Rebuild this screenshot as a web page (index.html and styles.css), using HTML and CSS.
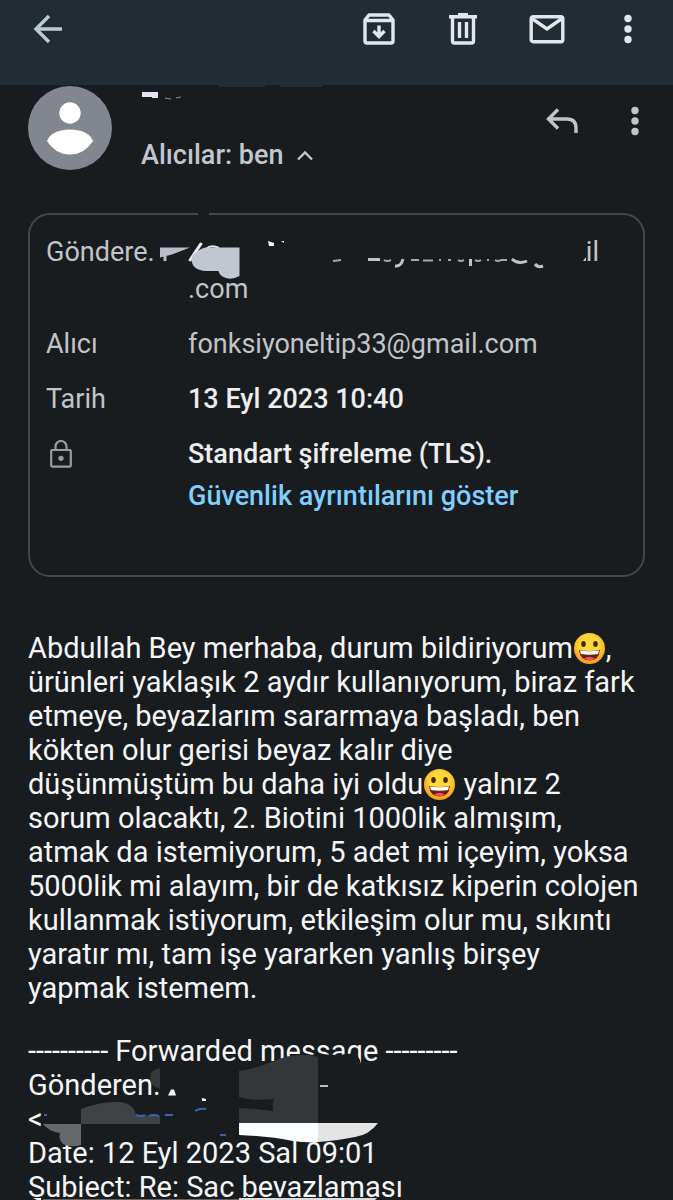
FILE: index.html
```html
<!DOCTYPE html>
<html lang="tr">
<head>
  <meta charset="UTF-8">
  <meta name="viewport" content="width=device-width, initial-scale=1.0">
  <title>E-posta</title>
  <link rel="stylesheet" href="styles.css">
</head>
<body>

<header class="toolbar">
  <button class="icon-btn" aria-label="Geri">
    <svg width="30" height="30" viewBox="0 0 30 30" fill="none" stroke="#bccad3" stroke-width="3.400"><path d="M29 15H4M16 2L3 15l13 13"/></svg>
  </button>
  <div class="actions">
    <button class="icon-btn" aria-label="Arşivle">
      <svg width="32" height="32" viewBox="0 0 32 32" fill="none" stroke="#e2e7ec" stroke-width="3.4"><path d="M2 7v21q0 2 2 2h24q2 0 2-2V7l-4-5H6zM3 7.500h26" stroke-linejoin="round"/><path d="M16 12.500v10M10.500 18l5.500 5.500 5.500-5.500"/></svg>
    </button>
    <button class="icon-btn" aria-label="Sil">
      <svg width="30" height="32" viewBox="0 0 30 32" fill="none" stroke="#e2e7ec" stroke-width="3.400"><path d="M1 3.700h28M10 1.700h10M4.500 4v24q0 2 2 2h17q2 0 2-2V4"/><path d="M11.500 9v16M18.500 9v16"/></svg>
    </button>
    <button class="icon-btn" aria-label="Okunmadı olarak işaretle">
      <svg width="36" height="30" viewBox="0 0 36 30" fill="none" stroke="#e2e7ec" stroke-width="3.400"><rect x="2.200" y="2.700" width="31.600" height="25" rx="2"/><path d="M3 4.500l15 10.500 15-10.500"/></svg>
    </button>
    <button class="icon-btn more" aria-label="Diğer seçenekler">
      <svg width="8" height="30" viewBox="0 0 8 30" fill="#e2e7ec"><circle cx="4" cy="4.500" r="3.700"/><circle cx="4" cy="15" r="3.700"/><circle cx="4" cy="25.500" r="3.700"/></svg>
    </button>
  </div>
</header>

<main>
  <section class="sender">
    <svg class="avatar" width="84" height="84" viewBox="0 0 84 84"><circle cx="42" cy="42" r="42" fill="#82868e"/><g fill="#fff"><circle cx="42" cy="27" r="10.700"/><path d="M19 55Q23 44 42 43.500 61 44 65 55 56 68.500 42 68.500 28 68.500 19 55z"/></g></svg>
    <div class="who">
      <svg class="name" width="190" height="51" viewBox="141 85 190 51">
        <path d="M218 85h47v2h-47zM280 85h42v2h-42z" fill="#222d33"/>
        <path d="M142 92h16v6h-6v-1h-10z" fill="#e2e5ea"/>
        <path d="M165 98l6 1M176 98l5-1" stroke="#8b9095" fill="none"/>
      </svg>
      <button class="recipients">Alıcılar: ben
        <svg width="16" height="11" viewBox="0 0 16 11" fill="none" stroke="#c1c7ce" stroke-width="2.400"><path d="M1 9.500l7-7 7 7"/></svg>
      </button>
    </div>
    <div class="sender-actions">
      <button class="icon-btn" aria-label="Yanıtla">
        <svg width="32" height="26" viewBox="0 0 32 26" fill="none" stroke="#c1c5c9" stroke-width="3.400"><path d="M12 1.500L2.500 11l9.500 9.500M3 11h18q9 0 9 9v5"/></svg>
      </button>
      <button class="icon-btn more" aria-label="Diğer">
        <svg width="8" height="30" viewBox="0 0 8 30" fill="#c1c5c9"><circle cx="4" cy="4.500" r="3.700"/><circle cx="4" cy="15" r="3.700"/><circle cx="4" cy="25.500" r="3.700"/></svg>
      </button>
    </div>
  </section>

  <section class="details">
    <dl>
      <dt>Göndere.</dt>
      <dd><span class="hidden-mail">il</span>.com</dd>
      <dt>Alıcı</dt>
      <dd>fonksiyoneltip33@gmail.com</dd>
      <dt>Tarih</dt>
      <dd class="bright">13 Eyl 2023 10:40</dd>
      <dt>
        <svg class="lock" width="22" height="28" viewBox="0 0 22 28" fill="none" stroke="#999da1" stroke-width="2.200"><rect x="1.200" y="10" width="19.600" height="16.600" rx="1"/><path d="M5.500 10V6.500a5.500 5.500 0 0 1 11 0V10"/><circle cx="11" cy="18.300" r="2.600" fill="#999da1" stroke="none"/></svg>
      </dt>
      <dd class="bright">Standart şifreleme (TLS).<a href="#">Güvenlik ayrıntılarını göster</a></dd>
    </dl>
    <svg class="scribble" width="617" height="364" viewBox="28 213 617 364" fill="none">
      <path d="M198 212h11v3h-11z" fill="#191c1f"/>
      <path d="M160 247.500l30 0-18 7-12 3z" fill="#b9bfc5"/>
      <path d="M165 256v5" stroke="#b9bfc5" stroke-width="3"/>
      <path d="M201.500 243l-12 18" stroke="#f1f3f5" stroke-width="3"/>
      <path d="M206 249q5-5 13-1" stroke="#e4e7ea" stroke-width="2"/>
      <path d="M192 256q6-7 14-8.500h33.500V276q-9 5-16 1-4-2-5-6h-12q-17-1-14.500-15z" fill="#c1c7ce"/>
      <path d="M268 241l6 2v3h-5zM281 241h3v2z" fill="#f1f3f5"/>
      <path d="M333 261l8-1M384 260q3 2 7 0M411 260h8M423 260.500h10M439 260h2M448 260h3M458 260q3 2 6 0M475 260q3 2 6 0M487 260h2M495 260q3 2 6 0h6" stroke="#a4a8ac" stroke-width="2"/>
      <path d="M368 259.500h12M403 259q-2 8-8 7M470.500 259v7M512 259q6 6 15 2M535 264q3 4 8 2" stroke="#c1c5c9" stroke-width="3"/>
      <path d="M583 261l3-4v4z" fill="#c1c5c9"/>
    </svg>
  </section>

  <article class="message">
    <svg width="0" height="0" class="defs">
      <defs>
        <radialGradient id="face" cx=".5" cy=".4" r=".6"><stop offset=".5" stop-color="#ffd83a"/><stop offset="1" stop-color="#f59a1e"/></radialGradient>
        <symbol id="grin" viewBox="0 0 33 33">
          <circle cx="16.500" cy="16.500" r="15.500" fill="url(#face)"/>
          <ellipse cx="10.500" cy="12" rx="2.300" ry="3" fill="#422b0d"/>
          <ellipse cx="22.500" cy="12" rx="2.300" ry="3" fill="#422b0d"/>
          <path d="M6 18q10.500 2 21 0-1 10.500-10.500 10.500T6 18z" fill="#6b1f16"/>
          <path d="M7 18.500q9.500 1.500 19 0l-.8 3.500q-8.700 1.500-17.400 0z" fill="#fff"/>
          <path d="M11 26.500q5.500-3.500 11 0-5.500 3.500-11 0z" fill="#ef5350"/>
        </symbol>
      </defs>
    </svg>
    <p>Abdullah Bey merhaba, durum bildiriyorum<svg class="emoji" aria-hidden="true"><use href="#grin"/></svg>, ürünleri yaklaşık 2 aydır kullanıyorum, biraz fark etmeye, beyazlarım sararmaya başladı, ben kökten olur gerisi beyaz kalır diye düşünmüştüm bu daha iyi oldu<svg class="emoji" aria-hidden="true"><use href="#grin"/></svg> yalnız 2 sorum olacaktı, 2. Biotini 1000lik almışım, atmak da istemiyorum, 5 adet mi içeyim, yoksa 5000lik mi alayım, bir de katkısız kiperin colojen kullanmak istiyorum, etkileşim olur mu, sıkıntı yaratır mı, tam işe yararken yanlış birşey yapmak istemem.</p>
    <div class="forwarded">
      ---------- Forwarded message ---------<br>
      Gönderen.<br>
      &lt;<br>
      Date: 12 Eyl 2023 Sal 09:01<br>
      Subject: Re: Saç beyazlaması
      <svg class="scribble" width="617" height="165" viewBox="28 1035 617 165" fill="none">
        <path d="M290 1063l10-7 18-2 20 1 18-2 4 7 2 9h-72z" fill="#191c1f"/>
        <path d="M160 1068q-10 2-10 10t10 11z" fill="#35393c"/>
        <path d="M168 1095.500h8l-2-6h-3zM202 1098l4 1v2h-4z" fill="#f4f6f8"/>
        <path d="M320 1086h8" stroke="#b9bcc0" stroke-width="2"/>
        <path d="M81 1109q20-8 39-7 14 2 16 13l24 1v8H81z" fill="#3f4345"/>
        <path d="M43 1124h38v21q-10 3-18-1-5-5-3-11-12-2-17-9z" fill="#64676b"/>
        <path d="M136 1115q5 2 9 0M149 1116q5-2 10 0M165 1115h8M195 1111q5-3 11-2M44 1115h3M220 1135h6" stroke="#3c62b4" stroke-width="2"/>
        <path d="M239 1071q16-2 35-10 24-10 44-4v66h-79v-15q12 0 34 3l-1-11q-17 2-33-3z" fill="#34373a"/>
        <path d="M239 1098q16 3 35 1l-2 7 1 5q-18-3-34-3z" fill="#191c1f"/>
        <path d="M239 1123h79v19q-12 1-25-1-24-5-54-6z" fill="#fbfdfe"/>
        <path d="M318 1123h60q-9 12-23 14-20 4-37 5z" fill="#e4e4e5"/>
        <path d="M28 1197h600v3H28z" fill="#191c1f"/>
        <path d="M239 1198h138l-2 2H239z" fill="#dcdddd"/>
        <path d="M33 1198h8v2h-4z" fill="#f4f6f8"/>
        <path d="M43 1199h196v1H43z" fill="#66605f"/>
      </svg>
    </div>
  </article>
</main>

</body>
</html>
```
FILE: styles.css
```css
* {
  box-sizing: border-box;
}
body {
  margin: 0;
  height: 100vh;
  overflow: hidden;
  background-color: #191c1f;
  color: #f4f6f8;
  font-family: Roboto, "Liberation Sans", sans-serif;
  font-size: 29px;
}
button {
  padding: 0;
  border: none;
  background: none;
  color: inherit;
  font: inherit;
  cursor: pointer;
}
.toolbar {
  display: flex;
  justify-content: space-between;
  height: 85px;
  padding: 5px 24px 0;
  background-color: #222d33;
}
.icon-btn {
  display: flex;
  align-items: center;
  justify-content: center;
  width: 48px;
  height: 48px;
}
.icon-btn.more {
  width: 42px;
}
.actions {
  display: flex;
  gap: 36px;
}
.sender {
  display: flex;
  padding: 0 17px 0 28px;
}
.avatar {
  margin-top: 1px;
}
.who {
  flex: 1;
  padding-left: 29px;
}
.name {
  display: block;
}
.recipients {
  display: flex;
  align-items: center;
  gap: 14px;
  color: #c1c7ce;
  font-size: 27px;
  font-weight: 500;
  line-height: 38px;
}
.sender-actions {
  display: flex;
  gap: 28px;
  padding-top: 12px;
}
.details {
  position: relative;
  margin: 39px 28px 0;
  padding: 19px 16px 60px;
  border: 2px solid #43474a;
  border-radius: 22px;
  color: #c1c5c9;
  font-size: 27px;
}
.details dl {
  display: grid;
  grid-template-columns: 124px 1fr;
  gap: 18px;
  margin: 0;
  line-height: 37px;
}
.details dd {
  margin: 0;
}
.details .bright {
  color: #eceef0;
  font-weight: 500;
}
.details a {
  display: block;
  margin-top: 5px;
  color: #7fcfff;
  text-decoration: none;
}
.hidden-mail {
  display: block;
  padding-right: 28px;
  text-align: right;
}
.lock {
  display: block;
  margin: 4px;
}
.scribble {
  position: absolute;
  top: -2px;
  left: -2px;
  pointer-events: none;
}
.message {
  padding: 54px 28px 0;
  line-height: 34px;
}
.message p {
  margin: 0 0 29px;
}
.defs {
  position: absolute;
}
.emoji {
  width: 33px;
  height: 33px;
  vertical-align: -7px;
}
.forwarded {
  position: relative;
}
.forwarded .scribble {
  top: 1px;
  left: 0;
}
```
